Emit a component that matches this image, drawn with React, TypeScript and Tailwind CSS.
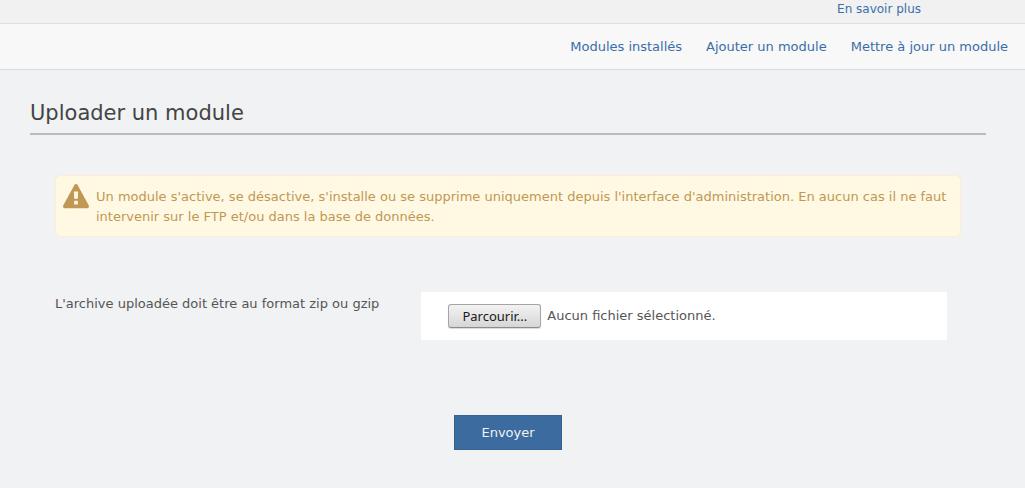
import { useRef, useState } from 'react';

const links = ['Modules installés', 'Ajouter un module', 'Mettre à jour un module'];

function WarningIcon() {
  return (
    <svg viewBox="0 0 1792 1792" className="h-[26px] w-[26px] shrink-0" fill="currentColor" aria-hidden="true">
      <path d="M1024 1375v-190q0-14-9.5-23.5t-22.5-9.5h-192q-13 0-22.5 9.5t-9.5 23.5v190q0 14 9.5 23.5t22.5 9.5h192q13 0 22.5-9.5t9.5-23.5zm-2-374l18-459q0-12-10-19-13-11-24-11h-220q-11 0-24 11-10 7-10 21l17 457q0 10 10 16.5t24 6.5h185q14 0 23.5-6.5t10.5-16.5zm-14-934l768 1408q35 63-2 126-17 29-46.5 46t-63.5 17h-1536q-34 0-63.5-17t-46.5-46q-37-63-2-126l768-1408q17-31 47-49t65-18 65 18 47 49z" />
    </svg>
  );
}

function FileField() {
  const input = useRef<HTMLInputElement>(null);
  const [fileName, setFileName] = useState('');

  return (
    <div className="relative mr-3.5 ml-1 flex min-w-0 flex-1 items-center bg-white px-[27px] py-3">
      <input
        ref={input}
        id="archive"
        type="file"
        accept=".zip,.gz"
        tabIndex={-1}
        className="sr-only"
        onChange={(e) => setFileName(e.target.files?.[0]?.name ?? '')}
      />
      <button
        type="button"
        onClick={() => input.current?.click()}
        className="h-6 rounded-[3px] border border-[#a5a5a5] border-b-[#8c8c8c] bg-linear-to-b from-[#f3f3f3] to-[#d6d6d6] px-[13px] font-['Noto_Sans',sans-serif] leading-5 text-[#1a1a1a] shadow-[0_1px_1px_rgba(0,0,0,0.15)]"
      >
        Parcourir...
      </button>
      <span className="ml-1.5 truncate leading-6">{fileName || 'Aucun fichier sélectionné.'}</span>
    </div>
  );
}

export default function App() {
  return (
    <div className="min-h-screen bg-[#f0f2f4] font-['DejaVu_Sans',sans-serif] text-[13px] leading-5 text-[#555]">
      <div className="flex h-6 items-start justify-end border-b border-[#dcdfe1] bg-[#f1f1f1] pr-[104px]">
        <a href="#" className="-mt-px text-xs leading-5 text-[#3a6ea9]">En savoir plus</a>
      </div>
      <nav className="flex h-[46px] items-center justify-end gap-6 border-b border-[#d8dbde] bg-[#f8f8f8] pr-[17px]">
        {links.map((label) => (
          <a key={label} href="#" className="text-[#3a6ea9]">{label}</a>
        ))}
      </nav>

      <main className="mr-[39px] ml-[30px] pt-7">
        <h1 className="border-b-2 border-[#b8bbbc] pb-[5px] text-[21px] leading-[30px] text-[#444]">Uploader un module</h1>

        <div className="px-[25px] pt-10 pb-9">
          <div role="alert" className="flex gap-[7px] rounded-[5px] border border-[#fbeed5] bg-[#fff8e3] pt-[11px] pr-2 pb-[9px] pl-[7px] text-[#c09853]">
            <div className="-mt-[3px]">
              <WarningIcon />
            </div>
            <p>
              Un module s'active, se désactive, s'installe ou se supprime uniquement depuis l'interface d'administration. En aucun cas il ne faut intervenir sur le FTP et/ou dans la base de données.
            </p>
          </div>

          <form className="mt-[55px]" onSubmit={(e) => e.preventDefault()}>
            <div className="flex items-start">
              <label htmlFor="archive" className="w-2/5 pt-0.5">L'archive uploadée doit être au format zip ou gzip</label>
              <FileField />
            </div>
            <div className="mt-[75px] flex justify-center">
              <button type="submit" className="h-[35px] border border-[#366393] bg-[#3c6b9f] px-[26px] text-[#f0f2f4]">Envoyer</button>
            </div>
          </form>
        </div>
      </main>
    </div>
  );
}
